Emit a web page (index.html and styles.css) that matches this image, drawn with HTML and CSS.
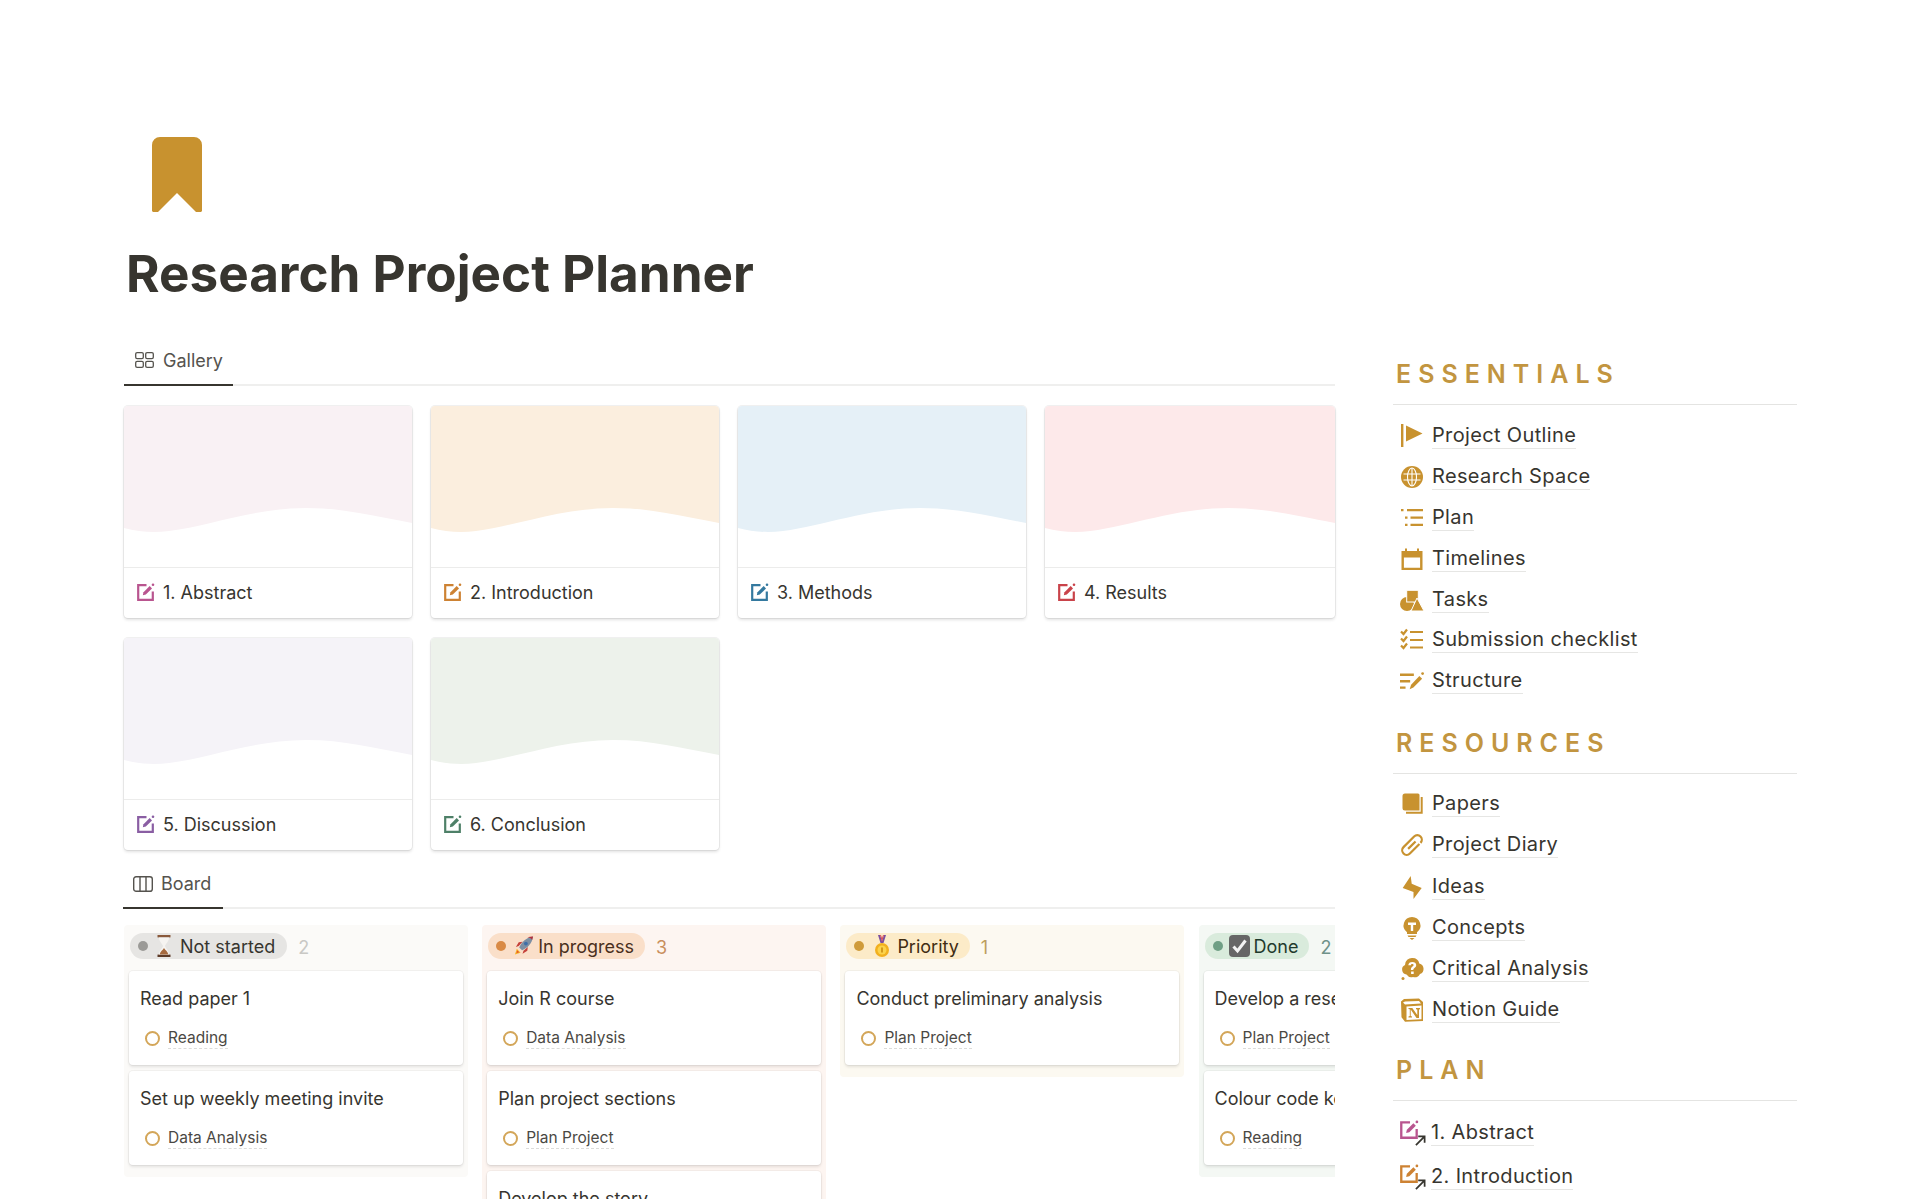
FILE: index.html
```html
<!DOCTYPE html>
<html lang="en">
<head>
<meta charset="utf-8">
<title>Research Project Planner</title>
<link rel="stylesheet" href="styles.css">
</head>
<body>
<svg class="defs" width="0" height="0" aria-hidden="true">
  <symbol id="edit" viewBox="0 0 18 18">
    <path d="M9.5 2.2H1.2v14.6h14.6V8.5" fill="none" stroke="currentColor" stroke-width="2.2"/>
    <path d="M5.8 12.3l.7-3 6.2-6.2 2.3 2.3-6.2 6.2z" fill="currentColor"/>
    <circle cx="16" cy="1.8" r="1.3" fill="currentColor"/>
  </symbol>
  <symbol id="wave" viewBox="0 0 288 161" preserveAspectRatio="none">
    <path d="M0 122C15 126 30 127 45 125C85 120 130 102 182 102C220 102 250 110 288 117V0H0Z" fill="currentColor"/>
  </symbol>
</svg>
<div class="page">
  <svg class="hero-icon" viewBox="0 0 50 75"><path d="M8 0H42a8 8 0 0 1 8 8V74l-1 1h-5L25 56 6 75H1l-1-1V8a8 8 0 0 1 8-8z" fill="currentColor"/></svg>
  <h1 class="title">Research Project Planner</h1>
  <div class="columns">
    <main class="main">
      <div class="tabbar">
        <div class="tab tab-gallery">
          <svg class="tab-icon" viewBox="0 0 19 16" fill="none" stroke="currentColor" stroke-width="1.3"><rect x=".7" y=".7" width="7.6" height="6" rx="1.4"/><rect x="10.7" y=".7" width="7.6" height="6" rx="1.4"/><rect x=".7" y="9.3" width="7.6" height="6" rx="1.4"/><rect x="10.7" y="9.3" width="7.6" height="6" rx="1.4"/></svg>
          <span>Gallery</span>
        </div>
      </div>
      <div class="gallery">
        <article class="gcard"><svg class="gimg c-abstract"><use href="#wave"/></svg><div class="gcap"><svg class="gicon t-abstract"><use href="#edit"/></svg><span>1. Abstract</span></div></article>
        <article class="gcard"><svg class="gimg c-intro"><use href="#wave"/></svg><div class="gcap"><svg class="gicon t-intro"><use href="#edit"/></svg><span>2. Introduction</span></div></article>
        <article class="gcard"><svg class="gimg c-methods"><use href="#wave"/></svg><div class="gcap"><svg class="gicon t-methods"><use href="#edit"/></svg><span>3. Methods</span></div></article>
        <article class="gcard"><svg class="gimg c-results"><use href="#wave"/></svg><div class="gcap"><svg class="gicon t-results"><use href="#edit"/></svg><span>4. Results</span></div></article>
        <article class="gcard"><svg class="gimg c-discussion"><use href="#wave"/></svg><div class="gcap"><svg class="gicon t-discussion"><use href="#edit"/></svg><span>5. Discussion</span></div></article>
        <article class="gcard"><svg class="gimg c-conclusion"><use href="#wave"/></svg><div class="gcap"><svg class="gicon t-conclusion"><use href="#edit"/></svg><span>6. Conclusion</span></div></article>
      </div>
      <div class="tabbar tabbar-board">
        <div class="tab tab-board">
          <svg class="tab-icon-board" viewBox="0 0 20 16" fill="none" stroke="currentColor" stroke-width="1.4"><rect x=".7" y=".7" width="18.6" height="14.6" rx="2.4"/><path d="M7 .7v14.6M13 .7v14.6"/></svg>
          <span>Board</span>
        </div>
      </div>
      <div class="board">
        <section class="col col-grey">
          <header class="col-head">
            <div class="pill pill-grey"><i class="dot"></i>
              <svg class="emoji em-hour" viewBox="0 0 16 22"><rect x="1.5" y="0" width="13" height="2.4" fill="#8a5a3c"/><rect x="1.5" y="19.6" width="13" height="2.4" fill="#5d3b28"/><path d="M3 2.4h10c0 4-3.6 6.4-4 8.6.4 2.2 4 4.6 4 8.6H3c0-4 3.6-6.4 4-8.6-.4-2.2-4-4.6-4-8.6z" fill="#f6f4f1"/><path d="M3.6 19.6c.6-3 3.4-4.600 4.400-6.500 1 1.900 3.800 3.500 4.400 6.500z" fill="#a66a3f"/></svg>
              <span>Not started</span></div>
            <span class="count count-grey">2</span>
          </header>
          <div class="kcard"><div class="ktitle">Read paper 1</div><div class="ktag"><i class="ring"></i><span>Reading</span></div></div>
          <div class="kcard"><div class="ktitle">Set up weekly meeting invite</div><div class="ktag"><i class="ring"></i><span>Data Analysis</span></div></div>
        </section>
        <section class="col col-orange">
          <header class="col-head">
            <div class="pill pill-orange"><i class="dot"></i>
              <svg class="emoji em-rocket" viewBox="0 0 22 22"><path d="M2 20l2-6 4 4z" fill="#f5b62a"/><path d="M3.500 18.500l1-3 2 2z" fill="#e8552d"/><path d="M6 11l-3 1 3-5 4-.5zM11 16l-1 3 5-3 .5-4z" fill="#c5403a"/><path d="M6.500 12.500C9 6.500 14 2 21 1c-1 7-5.500 12-11.500 14.500z" fill="#7d8fa3"/><path d="M15 1.800c2 0 4 1 5 3 .3-1.200.7-2.500 1-3.800-2 .2-4 .2-6 .8z" fill="#b5303a"/><circle cx="13.500" cy="8.500" r="2" fill="#3f6fa8"/></svg>
              <span>In progress</span></div>
            <span class="count count-orange">3</span>
          </header>
          <div class="kcard"><div class="ktitle">Join R course</div><div class="ktag"><i class="ring"></i><span>Data Analysis</span></div></div>
          <div class="kcard"><div class="ktitle">Plan project sections</div><div class="ktag"><i class="ring"></i><span>Plan Project</span></div></div>
          <div class="kcard"><div class="ktitle">Develop the story</div><div class="ktag"><i class="ring"></i><span>Plan Project</span></div></div>
        </section>
        <section class="col col-yellow">
          <header class="col-head">
            <div class="pill pill-yellow"><i class="dot"></i>
              <svg class="emoji em-medal" viewBox="0 0 16 22"><path d="M4 0h2l2 6 2-6h2L9.500 8h-3z" fill="#7a4fa0"/><path d="M6 0h1l1 3 1-3h1L8 7z" fill="#d8505a"/><circle cx="8" cy="15" r="7" fill="#f2b01e"/><circle cx="8" cy="15" r="4.500" fill="#fcd34a"/><rect x="7.200" y="12.500" width="1.600" height="5" fill="#c98a10"/></svg>
              <span>Priority</span></div>
            <span class="count count-yellow">1</span>
          </header>
          <div class="kcard"><div class="ktitle">Conduct preliminary analysis</div><div class="ktag"><i class="ring"></i><span>Plan Project</span></div></div>
        </section>
        <section class="col col-green">
          <header class="col-head">
            <div class="pill pill-green"><i class="dot"></i>
              <svg class="emoji em-check" viewBox="0 0 21 22"><rect width="21" height="22" rx="4" fill="#666"/><path d="M4.500 11.500l4 4.500 8-10.500" fill="none" stroke="#f2f2f2" stroke-width="3"/></svg>
              <span>Done</span></div>
            <span class="count count-green">2</span>
          </header>
          <div class="kcard"><div class="ktitle">Develop a research question</div><div class="ktag"><i class="ring"></i><span>Plan Project</span></div></div>
          <div class="kcard"><div class="ktitle">Colour code key papers</div><div class="ktag"><i class="ring"></i><span>Reading</span></div></div>
        </section>
      </div>
    </main>
    <aside class="side">
      <h2 class="side-h">ESSENTIALS</h2>
      <ul class="side-list">
        <li class="side-item"><svg class="sicon" viewBox="0 0 24 24"><rect x="1" y="0" width="2.400" height="23"/><path d="M6 1.500 22.500 9.500 6 17.500z"/></svg><a>Project Outline</a></li>
        <li class="side-item"><svg class="sicon" viewBox="0 0 24 24"><circle cx="12" cy="12" r="11"/><g class="cut"><ellipse cx="12" cy="12" rx="4.500" ry="9"/><path d="M12 3v18M3.500 9h17M3.500 15h17"/></g></svg><a>Research Space</a></li>
        <li class="side-item"><svg class="sicon" viewBox="0 0 24 24"><path d="M1 3h2.500v2.200H1zM7 3h16v2.200H7zM5 10.600h2.500v2.200H5zM10.500 10.600H23v2.200H10.500zM5 17.800h2.500V20H5zM10.500 17.800H23V20H10.500z"/></svg><a>Plan</a></li>
        <li class="side-item"><svg class="sicon" viewBox="0 0 24 24"><path d="M1.500 4h3.500V1.500h2V4h10V1.500h2V4h3.500v19h-21zm2.400 6.500v10.300h16.200V10.500z"/></svg><a>Timelines</a></li>
        <li class="side-item"><svg class="sicon" viewBox="0 0 24 24"><circle cx="7" cy="16" r="7"/><rect class="knock" x="6.700" y="2.300" width="11.600" height="11.700"/><path class="knock" d="M17 10l7 13H11z"/></svg><a>Tasks</a></li>
        <li class="side-item"><svg class="sicon sicon-line" viewBox="0 0 24 24"><path d="M1 3.500l2.500 2.500L7 1.500M1 10.500l2.500 2.500L7 8.500M1 17.500l2.500 2.500L7 15.500M10 4h13M10 12h13M10 19.500h13"/></svg><a>Submission checklist</a></li>
        <li class="side-item"><svg class="sicon" viewBox="0 0 26 24"><path d="M0 4h15v2.500H0zM0 11h11v2.500H0zM0 18h6v2.500H0z"/><path d="M10.500 21l1.500-5L21 6.500l3 3-9.500 9.500z"/><circle cx="24.500" cy="4" r="1.500"/></svg><a>Structure</a></li>
      </ul>
      <h2 class="side-h">RESOURCES</h2>
      <ul class="side-list side-list-res">
        <li class="side-item"><svg class="sicon" viewBox="0 0 24 24"><path d="M5 1.500h13a1.500 1.500 0 0 1 1.500 1.500v15.500H5a2.500 2.500 0 0 1-2.500-2.500V4A2.500 2.500 0 0 1 5 1.500z"/><path class="stroke2" d="M21.700 5v15.700H6"/></svg><a>Papers</a></li>
        <li class="side-item"><svg class="sicon sicon-line" viewBox="0 0 24 24"><path transform="rotate(45 12 12)" d="M12 7v10.500M16.500 6v13.500a4.500 4.500 0 0 1-9 0V4.500a4.500 4.500 0 0 1 9 0"/></svg><a>Project Diary</a></li>
        <li class="side-item"><svg class="sicon" viewBox="0 0 24 24"><path d="M2.700 13 10.700 1l1 7.700L21.700 13l-8.200 11v-7z"/></svg><a>Ideas</a></li>
        <li class="side-item"><svg class="sicon" viewBox="0 0 24 24"><path fill-rule="evenodd" d="M12 1a8.500 8.500 0 0 1 5 15.300V18H7v-1.700A8.500 8.500 0 0 1 12 1zM8 6.500V9h2.800v6h2.400V9H16V6.500z"/><path d="M7.500 19.500h9l-1 1.500h-7zM9.500 22h5L12 24z"/></svg><a>Concepts</a></li>
        <li class="side-item"><svg class="sicon" viewBox="0 0 24 24"><path fill-rule="evenodd" d="M12.500 1a7 7 0 0 1 6.800 5.500 5.500 5.500 0 0 1 .7 10.500 5.500 5.500 0 0 1-7 3 6 6 0 0 1-6.500-2.500A5 5 0 0 1 5 8a7 7 0 0 1 7.500-7zM12.300 5c-2.300 0-3.800 1.200-4 3.300h2.500c.1-.8.700-1.300 1.500-1.300s1.300.4 1.300 1.100c0 1.500-2.700 1.600-2.700 4.400v.5h2.400v-.3c0-1.600 2.900-1.900 2.900-4.700C16.200 6 14.600 5 12.300 5zM11.100 14.500v2.400h2.600v-2.400z"/><circle cx="3" cy="21.500" r="1.500"/></svg><a>Critical Analysis</a></li>
        <li class="side-item"><svg class="sicon" viewBox="0 0 24 24"><path fill-rule="evenodd" d="M1 3.500 4 1l15-.5 4 3.500v19l-18 .8-3.500-4.500zM3 4.500l2 2 16-1-2-2.500L5 3.500zM6.500 8.500v13.500l15-.8V7.500z"/><path d="M8.500 10h3.800l5 7v-5.500l-1.300-.3V10h4v1.200l-1 .3v8.500h-2.500l-5.800-8.500V18l1.300.4v1.100H8.500v-1.100l1.300-.4v-6.700l-1.300-.2z"/></svg><a>Notion Guide</a></li>
      </ul>
      <h2 class="side-h">PLAN</h2>
      <ul class="side-list side-list-plan">
        <li class="side-item side-item-plan"><span class="plan-ic t-abstract"><svg class="plan-edit"><use href="#edit"/></svg><svg class="plan-arrow" viewBox="0 0 12 12"><path d="M1 11 10.500 1.500M3.500 1.500h7v7"/></svg></span><a>1. Abstract</a></li>
        <li class="side-item side-item-plan"><span class="plan-ic t-intro"><svg class="plan-edit"><use href="#edit"/></svg><svg class="plan-arrow" viewBox="0 0 12 12"><path d="M1 11 10.500 1.500M3.500 1.500h7v7"/></svg></span><a>2. Introduction</a></li>
      </ul>
    </aside>
  </div>
</div>
</body>
</html>
```
FILE: styles.css
```css
* { box-sizing: border-box; }
html, body { margin: 0; height: 1199px; overflow: hidden; background: #fff; }
body { font-family: Inter, "Noto Sans", sans-serif; color: #37352f; }
.defs { position: absolute; }
.page { padding: 137px 0 0 124px; }
.hero-icon { display: block; width: 50px; height: 75px; margin-left: 28px; color: #c8922f; }
.title { margin: 31px 0 0 2px; font-size: 51.2px; line-height: 60px; font-weight: 700; color: #37352f; }
.columns { display: flex; gap: 59px; margin-top: 37px; }
.main { width: 1211px; flex: none; min-width: 0; }

.tabbar { height: 46px; border-bottom: 2px solid #efefee; display: flex; }
.tab { display: flex; align-items: center; gap: 8px; height: 46px; margin-bottom: -2px; border-bottom: 2px solid #37352f; font-size: 18px; color: #55534e; }
.tab-gallery { width: 109px; padding: 0 0 4px 11px; gap: 9px; }
.tab-board { width: 100px; margin-left: -1px; padding: 10px 0 0 10px; }
.tab-icon { width: 19px; height: 16px; color: #55534e; }
.tab-icon-board { width: 20px; height: 16px; color: #55534e; }

.gallery { display: grid; grid-template-columns: repeat(3, 288px) 1fr; gap: 20px 19px; margin-top: 20px; }
.gcard { height: 212px; border-radius: 4px; overflow: hidden; background: #fff; box-shadow: 0 0 0 1px rgba(15,15,15,.06), 0 2px 3px rgba(15,15,15,.12); }
.gimg { display: block; width: 100%; height: 161px; }
.gcap { height: 51px; border-top: 1px solid #ececeb; display: flex; align-items: center; gap: 8px; padding: 0 0 2px 13px; font-size: 18px; color: #37352f; }
.gicon { width: 18px; height: 18px; flex: none; }
.c-abstract { color: #f9f1f4; }
.c-intro { color: #fbeede; }
.c-methods { color: #e5f0f7; }
.c-results { color: #fde9ea; }
.c-discussion { color: #f5f3f8; }
.c-conclusion { color: #edf2eb; }
.t-abstract { color: #b9558f; }
.t-intro { color: #cd8233; }
.t-methods { color: #34799f; }
.t-results { color: #c9434a; }
.t-discussion { color: #8a5ea3; }
.t-conclusion { color: #4e8068; }

.tabbar-board { height: 59px; }
.tabbar-board .tab { height: 59px; align-self: flex-end; }
.board { display: flex; gap: 14.200px; margin-top: 16px; overflow: hidden; align-items: flex-start; }
.col { width: 344px; flex: none; padding: 8px 5px 12px; border-radius: 4px; }
.col-grey { background: #fbfaf8; }
.col-orange { background: #fdf5f1; }
.col-yellow { background: #fcf9f1; }
.col-green { background: #f4f8f4; }
.col-head { display: flex; align-items: center; gap: 11px; height: 26px; margin-bottom: 12px; }
.pill { display: flex; align-items: center; height: 26px; padding: 0 11px 0 8px; margin-left: 1px; border-radius: 13px; font-size: 18px; }
.dot { width: 10px; height: 10px; border-radius: 50%; flex: none; }
.pill-grey { background: #e6e5e3; color: #37352f; padding-right: 12px; }
.pill-grey .dot { background: #9b9a97; }
.pill-orange { background: #fadfc9; color: #4a2f1d; }
.pill-orange .dot { background: #d98a45; }
.pill-yellow { background: #fcebc8; color: #402c13; }
.pill-yellow .dot { background: #cf9b3a; }
.pill-green { background: #d9ebdc; color: #1f3a2c; }
.pill-green .dot { background: #6f9f85; }
.emoji { height: 22px; flex: none; margin: 0 4px 0 8px; }
.em-hour { width: 16px; margin-right: 8px; }
.em-rocket { width: 21px; margin: 0 4px 0 7px; }
.em-medal { width: 16px; margin: 0 7px 0 10px; }
.em-check { width: 21px; margin: 0 4px 0 6px; }
.count { font-size: 18px; line-height: 26px; position: relative; top: 2px; }
.count-grey { color: #c9c8c5; }
.count-orange { color: #c98f5c; }
.count-yellow { color: #bd9f5f; }
.count-green { color: #6f9289; }

.kcard { height: 94px; margin-bottom: 6px; padding: 17px 0 0 11px; background: #fff; border-radius: 4px; box-shadow: 0 0 0 1px rgba(15,15,15,.04), 0 2px 3px rgba(15,15,15,.1); white-space: nowrap; overflow: hidden; }
.kcard:last-child { margin-bottom: 0; }
.ktitle { font-size: 18px; line-height: 22px; color: #37352f; }
.ktag { display: flex; align-items: center; gap: 8px; margin: 18px 0 0 5px; font-size: 15.5px; line-height: 22px; color: #4a4843; }
.ktag span { border-bottom: 1px dashed #dcdcda; line-height: 20px; }
.ring { width: 15px; height: 15px; border: 2px solid #d3a659; border-radius: 50%; flex: none; }

.side { width: 403px; flex: none; padding-top: 20px; }
.side-h { margin: 0 0 0 -1px; padding: 0 0 16px 3px; height: 45px; border-bottom: 1px solid #e4e4e2; font-size: 25px; line-height: 28px; font-weight: 600; letter-spacing: 7px; color: #c29540; }
.side-list { list-style: none; margin: 11px 0 27.200px; padding: 0 0 0 6px; }
.side-item { display: flex; align-items: center; gap: 8px; height: 40.800px; font-size: 20px; }
.side-item a { display: inline-block; line-height: 24px; padding-bottom: 1px; border-bottom: 1.500px solid #e6e6e4; color: #37352f; letter-spacing: .35px; }
.side-list-res { margin: 10px 0 26px; }
.side-list-res .side-item { height: 41.100px; }
.sicon { width: 24px; height: 24px; flex: none; fill: #c8922f; color: #c8922f; }
.sicon-line { fill: none; stroke: #c8922f; stroke-width: 2.2; }
.cut { fill: none; stroke: #fff; stroke-width: 1.1; }
.knock { stroke: #fff; stroke-width: 1; }
.stroke2 { fill: none; stroke: #c8922f; stroke-width: 2; }
.side-list-plan { margin-top: 10px; }
.side-item-plan { height: 44px; gap: 4px; }
.plan-ic { position: relative; display: block; width: 27px; height: 26px; flex: none; }
.plan-edit { position: absolute; left: 0; top: 0; width: 19px; height: 19px; }
.plan-arrow { position: absolute; right: 1px; bottom: 0; width: 11px; height: 11px; fill: none; stroke: #37352f; stroke-width: 1.9; }
```
